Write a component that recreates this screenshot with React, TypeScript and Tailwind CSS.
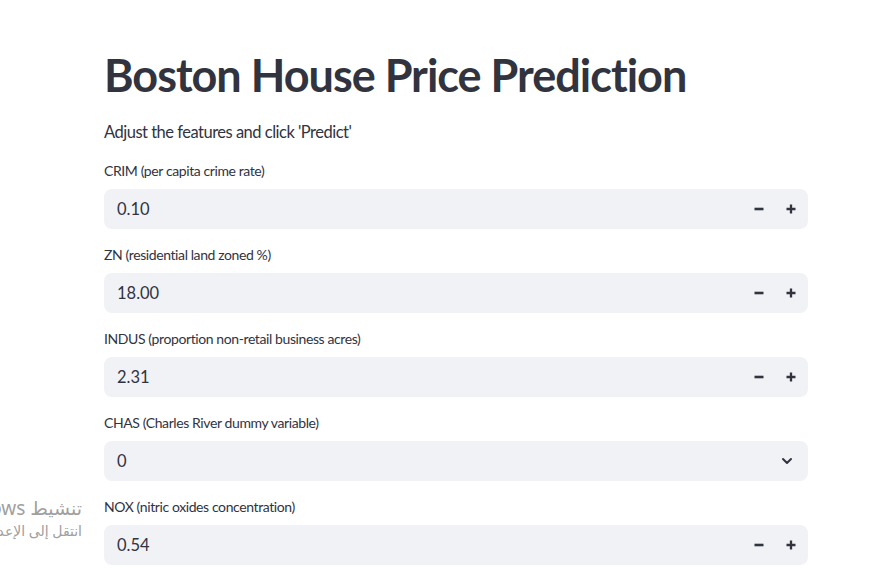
import React from 'react';

const fields = [
  { label: 'CRIM (per capita crime rate)', value: '0.10', kind: 'number' },
  { label: 'ZN (residential land zoned %)', value: '18.00', kind: 'number' },
  { label: 'INDUS (proportion non-retail business acres)', value: '2.31', kind: 'number' },
  { label: 'CHAS (Charles River dummy variable)', value: '0', kind: 'select' },
  { label: 'NOX (nitric oxides concentration)', value: '0.54', kind: 'number' },
];

function MinusIcon() {
  return (
    <svg width="12" height="12" viewBox="0 0 12 12">
      <path d="M1.5 6h9" stroke="#31333F" strokeWidth="2.6" />
    </svg>
  );
}

function PlusIcon() {
  return (
    <svg width="12" height="12" viewBox="0 0 12 12">
      <path d="M1.5 6h9M6 1.5v9" stroke="#31333F" strokeWidth="2.3" />
    </svg>
  );
}

function ChevronIcon() {
  return (
    <svg width="14" height="14" viewBox="0 0 14 14" fill="none">
      <path d="M3 5l4 4 4-4" stroke="#31333F" strokeWidth="2" strokeLinecap="round" strokeLinejoin="round" />
    </svg>
  );
}

export default function App() {
  return (
    <div className="relative min-h-[570px] bg-white overflow-hidden text-[#31333F]" style={{ fontFamily: '"Source Sans Pro", "Lato", sans-serif' }}>
      <div className="w-[704px] ml-[104px] pt-[49px]">
        <h1 className="text-[45px] leading-[52px] font-bold tracking-[-1px]">Boston House Price Prediction</h1>

        <p className="mt-[19px] text-[16.5px] leading-[24px] tracking-[-0.5px]">Adjust the features and click 'Predict'</p>

        <div className="mt-[17px] flex flex-col gap-[16px]">
          {fields.map(f => (
            <div key={f.label}>
              <div className="text-[14px] leading-[20px] h-[20px] mb-[8px] tracking-[-0.4px]">{f.label}</div>
              <div className="h-[40px] rounded-[8px] bg-[#F0F2F6] flex items-center pl-[13px] pr-[1px]">
                <span className="text-[16.5px] flex-1">{f.value}</span>
                {f.kind === 'number' ? (
                  <div className="flex items-center">
                    <div className="w-[32px] h-[40px] flex items-center justify-center"><MinusIcon /></div>
                    <div className="w-[32px] h-[40px] flex items-center justify-center"><PlusIcon /></div>
                  </div>
                ) : (
                  <div className="w-[32px] h-[40px] flex items-center justify-center mr-[4px]"><ChevronIcon /></div>
                )}
              </div>
            </div>
          ))}
        </div>
      </div>

      {/* windows watermark */}
      <div dir="rtl" className="absolute right-[792px] top-[495px] text-right whitespace-nowrap text-[#a0a0a0]" style={{ fontFamily: '"Noto Sans", "DejaVu Sans", sans-serif' }}>
        <div className="text-[19px] leading-[26px]">تنشيط Windows</div>
        <div className="text-[14px] leading-[20px]">انتقل إلى الإعدادات لتنشيط Windows.</div>
      </div>
    </div>
  );
}
